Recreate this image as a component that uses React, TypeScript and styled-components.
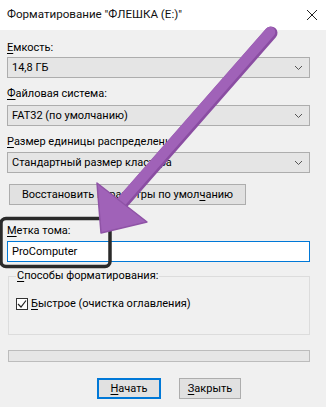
import React from "react";
import styled, { createGlobalStyle } from "styled-components";

const GlobalStyle = createGlobalStyle`
  html, body {
    margin: 0;
    padding: 0;
    background: #f0f0f0;
  }
  body {
    font-family: Roboto, "Noto Sans", sans-serif;
    font-size: 11px;
    color: #000;
  }
`;

const Window = styled.div`
  position: relative;
  width: 326px;
  height: 407px;
  overflow: hidden;
  background: #f0f0f0;
  display: flex;
  flex-direction: column;
`;

const TitleBar = styled.div`
  height: 30px;
  background: #fff;
  display: flex;
  align-items: center;
  justify-content: space-between;
  padding: 0 8px 0 7px;
  box-sizing: border-box;
  flex-shrink: 0;
`;

const Title = styled.span`
  font-size: 11.6px;
  color: #111;
  margin-top: -2px;
`;

const Body = styled.div`
  display: flex;
  flex-direction: column;
  padding: 0 16px 0 7px;
`;

const Label = styled.div<{ $top: number }>`
  margin-top: ${(p) => p.$top}px;
  height: 15px;
  line-height: 15px;
  white-space: nowrap;
`;

const Combo = styled.div<{ $top: number }>`
  margin-top: ${(p) => p.$top}px;
  height: 21px;
  box-sizing: border-box;
  border: 1px solid #adadad;
  background: #e5e5e5;
  display: flex;
  align-items: center;
  justify-content: space-between;
  padding: 0 6px 0 4px;
`;

const Button = styled.div<{ $primary?: boolean; $width: number }>`
  width: ${(p) => p.$width}px;
  height: 21px;
  box-sizing: border-box;
  border: ${(p) => (p.$primary ? "2px solid #0078d7" : "1px solid #adadad")};
  background: #e1e1e1;
  display: flex;
  align-items: center;
  justify-content: center;
  white-space: nowrap;
`;

const RestoreRow = styled.div`
  margin-top: 11px;
  padding-left: 2px;
`;

const TextField = styled.div`
  margin-top: 3px;
  height: 21px;
  box-sizing: border-box;
  border: 1px solid #0078d7;
  background: #fff;
  display: flex;
  align-items: center;
  padding-left: 4px;
`;

const Group = styled.div`
  position: relative;
  margin: 14px 0 0 1px;
  height: 59px;
  box-sizing: border-box;
  border: 1px solid #dcdcdc;
  padding: 20px 0 0 7px;
`;

const Legend = styled.span`
  position: absolute;
  top: -9px;
  left: 7px;
  padding: 0 1px;
  background: #f0f0f0;
  line-height: 15px;
`;

const CheckRow = styled.div`
  display: flex;
  align-items: center;
  gap: 3px;
`;

const CheckBox = styled.div`
  width: 12px;
  height: 12px;
  box-sizing: border-box;
  border: 1px solid #333;
  background: #fff;
  display: flex;
  align-items: center;
  justify-content: center;
`;

const Progress = styled.div`
  margin: 15px 0 0 1px;
  height: 12px;
  box-sizing: border-box;
  border: 1px solid #bcbcbc;
  background: #e6e6e6;
`;

const ButtonRow = styled.div`
  margin-top: 16px;
  display: flex;
  gap: 18px;
  padding-left: 90px;
`;

const U = styled.span`
  text-decoration: underline;
  text-underline-offset: 2px;
`;

const Overlay = styled.svg`
  position: absolute;
  top: 0;
  left: 0;
  pointer-events: none;
`;

const Chevron = () => (
  <svg width="9" height="6" viewBox="0 0 9 6">
    <path d="M1 1 L4.5 4.5 L8 1" fill="none" stroke="#555" strokeWidth="1" />
  </svg>
);

export default function App() {
  return (
    <Window>
      <GlobalStyle />
      <TitleBar>
        <Title>Форматирование "ФЛЕШКА (E:)"</Title>
        <svg width="12" height="12" viewBox="0 0 12 12">
          <path d="M1 1 L11 11 M11 1 L1 11" stroke="#222" strokeWidth="1" />
        </svg>
      </TitleBar>
      <Body>
        <Label $top={10}>
          <U>Е</U>мкость:
        </Label>
        <Combo $top={2}>
          <span>14,8 ГБ</span>
          <Chevron />
        </Combo>
        <Label $top={8}>
          <U>Ф</U>айловая система:
        </Label>
        <Combo $top={4}>
          <span>FAT32 (по умолчанию)</span>
          <Chevron />
        </Combo>
        <Label $top={8}>
          <U>Р</U>азмер единицы распределения
        </Label>
        <Combo $top={3}>
          <span>Стандартный размер кластера</span>
          <Chevron />
        </Combo>
        <RestoreRow>
          <Button $width={237}>
            Восстановить параметры по умол<U>ч</U>анию
          </Button>
        </RestoreRow>
        <Label $top={18}>
          <U>М</U>етка тома:
        </Label>
        <TextField>ProComputer</TextField>
        <Group>
          <Legend>
            <U>С</U>пособы форматирования:
          </Legend>
          <CheckRow>
            <CheckBox>
              <svg width="10" height="10" viewBox="0 0 10 10">
                <path d="M1 5 L4 8 L9 1.5" fill="none" stroke="#222" strokeWidth="1.2" />
              </svg>
            </CheckBox>
            <span>
              <U>Б</U>ыстрое (очистка оглавления)
            </span>
          </CheckRow>
        </Group>
        <Progress />
        <ButtonRow>
          <Button $primary $width={64}>
            <U>Н</U>ачать
          </Button>
          <Button $width={62}>
            <U>З</U>акрыть
          </Button>
        </ButtonRow>
      </Body>
      <Overlay width="326" height="407" viewBox="0 0 326 407">
        <rect x="1" y="218.5" width="109" height="48" rx="5" fill="none" stroke="#2a2a2a" strokeWidth="3.5" />
        <line x1="271" y1="33" x2="122" y2="203" stroke="#8a4da2" strokeWidth="13" strokeLinecap="round" />
        <line x1="270" y1="32" x2="121" y2="202" stroke="#a062b8" strokeWidth="10.5" strokeLinecap="round" />
        <path d="M97 183 L101 233 L147 222 Z" fill="#a062b8" stroke="#8f53a6" strokeWidth="1.5" strokeLinejoin="round" />
      </Overlay>
    </Window>
  );
}
